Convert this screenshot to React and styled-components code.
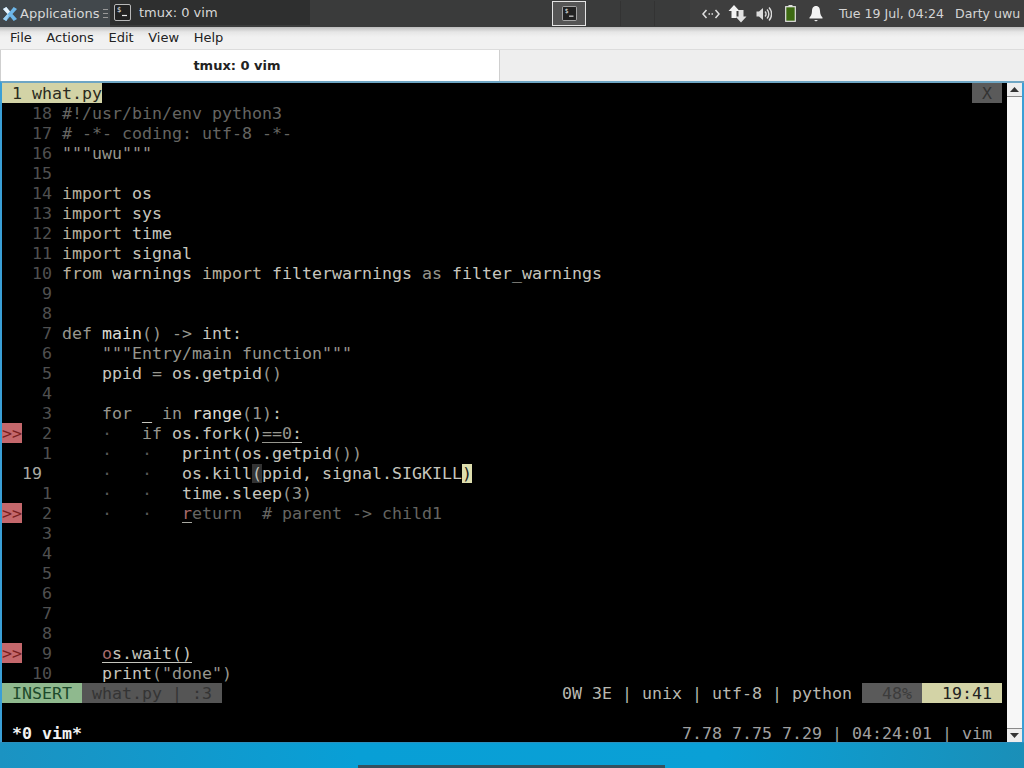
import React from 'react';
import styled, { createGlobalStyle } from 'styled-components';

const GlobalStyle = createGlobalStyle`
  html, body {
    margin: 0;
    padding: 0;
    background: #0b9ad0;
  }
  * {
    box-sizing: border-box;
  }
`;

const Screen = styled.div`
  width: 1024px;
  height: 768px;
  overflow: hidden;
  display: flex;
  flex-direction: column;
  font-family: "DejaVu Sans", sans-serif;
  font-size: 13px;
`;

/* top panel */
const Panel = styled.div`
  height: 27px;
  flex: none;
  display: flex;
  align-items: stretch;
  background: #3a3b3b;
  color: #d8d8d8;
  white-space: nowrap;
`;

const AppsButton = styled.div`
  width: 110px;
  display: flex;
  align-items: center;
  gap: 3px;
  padding-left: 3px;
  background: #42484c;
  flex: none;
`;

const Handle = styled.div`
  width: 5px;
  height: 9px;
  margin-left: 1px;
  border-top: 1px solid #999;
  border-bottom: 1px solid #999;
  position: relative;
  &::after {
    content: '';
    position: absolute;
    left: 0;
    right: 0;
    top: 3px;
    border-top: 1px solid #999;
  }
`;

const WindowButton = styled.div`
  width: 200px;
  display: flex;
  align-items: center;
  gap: 8px;
  padding-left: 4px;
  margin-bottom: 2px;
  background: #2e2f2f;
  flex: none;
`;

const PanelSpacer = styled.div`
  width: 242px;
  flex: none;
`;

const Pager = styled.div`
  display: flex;
  flex: none;
  width: 138px;
`;

const PagerCell = styled.div`
  width: 34px;
  margin-right: ${(props) => (props.$active ? '1px' : '0')};
  height: 25px;
  margin-top: 1px;
  display: flex;
  align-items: center;
  justify-content: center;
  border: ${(props) => (props.$active ? '1px solid #e4e4e4' : 'none')};
  border-right: ${(props) => (props.$active ? '1px solid #e4e4e4' : '1px solid #333')};
  background: ${(props) => (props.$active ? '#555' : 'transparent')};
`;

const Tray = styled.div`
  flex: 1;
  display: flex;
  align-items: center;
  padding-left: 12px;
  background: #3e3e3e;
  overflow: hidden;
  font-size: 12.6px;
`;

const TrayIcon = styled.svg`
  flex: none;
  margin-right: ${(props) => props.$gap}px;
`;

const Clock = styled.span`
  margin-left: 2px;
  color: #d4d4d4;
`;

const UserName = styled.span`
  margin-left: 11px;
  color: #d4d4d4;
`;

/* terminal window chrome */
const MenuBar = styled.div`
  height: 22px;
  flex: none;
  display: flex;
  align-items: center;
  gap: 14.6px;
  padding: 0 0 2px 10px;
  color: #222;
  background: linear-gradient(#bdbdbd 0, #e6e6e6 5px, #f1f1f1 10px);
`;

const TabBar = styled.div`
  height: 32px;
  flex: none;
  display: flex;
  background: #eeeeee;
  border-top: 1px solid #dcdcdc;
`;

const Tab = styled.div`
  width: 500px;
  display: flex;
  align-items: center;
  justify-content: center;
  padding-right: 26px;
  background: #fff;
  border-left: 1px solid #cfcfcf;
  border-right: 1px solid #cfcfcf;
  color: #222;
  font-weight: bold;
`;

const Term = styled.div`
  height: 661px;
  flex: none;
  display: flex;
  border-top: 2px solid #6fa6c4;
  border-left: 2px solid #3a9fd6;
  background: #000;
`;

const Grid = styled.div`
  width: 1005px;
  flex: none;
  display: flex;
  flex-direction: column;
  padding-right: 5px;
  font-family: "DejaVu Sans Mono", monospace;
  font-size: 16.61px;
  color: #c4c4bc;
`;

const Row = styled.div`
  height: 20px;
  line-height: 22px;
  flex: none;
  display: flex;
  white-space: pre;
`;

const SpacedRow = styled(Row)`
  justify-content: space-between;
`;

const BlankRow = styled.div`
  height: 20px;
  flex: none;
`;

const Sign = styled.span`
  width: 20px;
  flex: none;
  color: #7a1f1f;
  background: ${(props) => (props.$on ? '#c4686c' : 'transparent')};
`;

const Num = styled.span`
  width: 40px;
  flex: none;
  padding-right: ${(props) => (props.$current ? '20px' : '10px')};
  color: ${(props) => (props.$current ? '#aaaaa2' : '#505050')};
  text-align: ${(props) => (props.$current ? 'left' : 'right')};
`;

const TONES = {
  text: '#c6c6be',
  name: '#dcdcd4',
  key: '#b8b09e',
  soft: '#96968e',
  dim: '#656562',
  dot: '#565656',
  mark: '#a86c6c',
};

const Tok = styled.span`
  color: ${(props) => TONES[props.$tone || 'text']};
  text-decoration: ${(props) => (props.$under ? 'underline' : 'none')};
  text-underline-offset: 3px;
  text-decoration-thickness: 1px;
  text-decoration-color: ${(props) => props.$lineColor || 'currentColor'};
`;

const ParenOpen = styled.span`
  background: #333;
  color: #c0c0b8;
`;

const ParenClose = styled.span`
  background: #dedeae;
  color: #1c1c1c;
`;

const BufferTab = styled.span`
  width: 100px;
  padding-left: 10px;
  background: #d3d3a6;
  color: #2a2a20;
`;

const CloseTab = styled.span`
  width: 30px;
  padding-left: 10px;
  background: #5a5a5a;
  color: #333;
`;

const ModeLabel = styled.span`
  width: 80px;
  padding-left: 10px;
  background: #8fb98e;
  color: #1d4a2b;
`;

const FileInfo = styled.span`
  width: 140px;
  padding-left: 10px;
  background: #555;
  color: #343434;
`;

const StatusLeft = styled.div`
  display: flex;
`;

const StatusRight = styled.div`
  display: flex;
  width: 440px;
  color: #b8b8b0;
`;

const StatusInfo = styled.span`
  width: 300px;
`;

const Percent = styled.span`
  width: 60px;
  padding-left: 20px;
  background: #5a5a5a;
  color: #3c3c3c;
`;

const Position = styled.span`
  width: 80px;
  padding-left: 20px;
  background: #d3d3a6;
  color: #222;
`;

const Windows = styled.span`
  padding-left: 10px;
  color: #f2f2f2;
  font-weight: bold;
`;

const SystemInfo = styled.span`
  padding-right: 10px;
  color: #a0a0a0;
`;

const Scrollbar = styled.div`
  flex: 1;
  display: flex;
  flex-direction: column;
  justify-content: space-between;
  border-right: 2px solid #3a9fd6;
  background: #f7f7f7;
`;

const ScrollButton = styled.div`
  height: 14px;
  display: flex;
  align-items: center;
  justify-content: center;
  background: #ededed;
  border-bottom: ${(props) => (props.$down ? 'none' : '1px solid #8a8a8a')};
  border-top: ${(props) => (props.$down ? '1px solid #8a8a8a' : 'none')};
`;

const Desktop = styled.div`
  flex: 1;
  display: flex;
  align-items: flex-end;
  justify-content: flex-start;
  padding-left: 358px;
  background: linear-gradient(90deg, #1b93c2 0, #089fd6 35%, #0aa0d6 70%, #1a8fb8 100%);
  border-top: 1px solid #2b8fbd;
`;

const Dock = styled.div`
  width: 307px;
  height: 3px;
  background: #35505e;
`;

const XfceLogo = () => (
  <svg width="14" height="16" viewBox="0 0 17 18">
    <path d="M0 3 L4 0.5 L8.5 6 L13 0.5 L17 3 L11.5 9 L17 15 L13 17.5 L8.5 12 L4 17.5 L0 15 L5.5 9 Z" fill="#6db6e8" />
    <path d="M0 3 L4 0.5 L8.5 6 L5.5 9 Z" fill="#e8f4fc" />
    <path d="M0 15 L5.5 9 L7 10.5 L4 17.5 Z" fill="#9ed0f2" />
  </svg>
);

const TerminalIcon = ({ size = 17 }) => (
  <svg width={size} height={size} viewBox="0 0 17 17">
    <rect x="0.5" y="0.5" width="16" height="16" rx="1.5" fill="#222" stroke="#b8b8b8" />
    <text x="3" y="8" fontSize="7" fontFamily="DejaVu Sans Mono" fill="#eee">$</text>
    <path d="M8 11.5 H13" stroke="#eee" strokeWidth="1.2" />
  </svg>
);

const NetworkIcon = () => (
  <TrayIcon $gap={8} width="18" height="12" viewBox="0 0 18 12" fill="none" stroke="#e0e0e0" strokeWidth="1.5">
    <path d="M4.5 2 L1 6 L4.5 10" />
    <path d="M13.5 2 L17 6 L13.5 10" />
    <path d="M6.5 6 H11.5" strokeDasharray="1.5 1.5" />
  </TrayIcon>
);

const ArrowsIcon = () => (
  <TrayIcon $gap={9} width="19" height="18" viewBox="0 0 19 18">
    <path d="M6 0 L11.5 6 H8.5 V13 H3.5 V6 H0.5 Z" fill="#f2f2f2" />
    <path d="M13 17.5 L7.5 11.5 H10.5 V5 H15.5 V11.5 H18.5 Z" fill="#e2e2e2" />
  </TrayIcon>
);

const SpeakerIcon = () => (
  <TrayIcon $gap={13} width="16" height="16" viewBox="0 0 16 16" fill="none" stroke="#dcdcdc" strokeWidth="1.4">
    <path d="M0.5 5.5 H3 L7 2 V14 L3 10.5 H0.5 Z" fill="#dcdcdc" stroke="none" />
    <path d="M9 5.5 A3.5 3.5 0 0 1 9 10.5" />
    <path d="M11 3.5 A6.5 6.5 0 0 1 11 12.5" />
    <path d="M13 1.5 A9.5 9.5 0 0 1 13 14.5" />
  </TrayIcon>
);

const BatteryIcon = () => (
  <TrayIcon $gap={13} width="11" height="17" viewBox="0 0 11 17">
    <rect x="3.5" y="0" width="4" height="2" fill="#e0e0e0" />
    <rect x="0.7" y="1.7" width="9.6" height="14.6" fill="#3d6a12" stroke="#e4e4e4" strokeWidth="1.2" />
  </TrayIcon>
);

const BellIcon = () => (
  <TrayIcon $gap={14} width="14" height="17" viewBox="0 0 14 17">
    <path d="M7 1 C10 1 11 3.5 11 6 C11 9.5 12.5 11.5 13.5 12.5 V13.5 H0.5 V12.5 C1.5 11.5 3 9.5 3 6 C3 3.5 4 1 7 1 Z" fill="#f2f2f2" />
    <path d="M5 15 H9 L7 16.5 Z" fill="#f2f2f2" />
  </TrayIcon>
);

const Arrow = ({ down }) => (
  <svg width="9" height="5" viewBox="0 0 9 5">
    <path d={down ? 'M0 0 H9 L4.5 5 Z' : 'M0 5 H9 L4.5 0 Z'} fill="#333" />
  </svg>
);

const Line = ({ n, sign, current, children }) => (
  <Row>
    <Sign $on={sign}>{sign ? '>>' : '  '}</Sign>
    <Num $current={current}>{n}</Num>
    <span>{children}</span>
  </Row>
);

const Dots = ({ count }) => (
  <>
    {'    '}
    <Tok $tone="dot">·</Tok>
    {'   '}
    {count > 1 && (
      <>
        <Tok $tone="dot">·</Tok>
        {'   '}
      </>
    )}
  </>
);

const MENU_ITEMS = ['File', 'Actions', 'Edit', 'View', 'Help'];

const App = () => {
  return (
    <Screen>
      <GlobalStyle />
      <Panel>
        <AppsButton>
          <XfceLogo />
          <span>Applications</span>
          <Handle />
        </AppsButton>
        <WindowButton>
          <TerminalIcon />
          <span>tmux: 0 vim</span>
        </WindowButton>
        <PanelSpacer />
        <Pager>
          <PagerCell $active>
            <TerminalIcon size={15} />
          </PagerCell>
          <PagerCell />
          <PagerCell />
        </Pager>
        <Tray>
          <NetworkIcon />
          <ArrowsIcon />
          <SpeakerIcon />
          <BatteryIcon />
          <BellIcon />
          <Clock>Tue 19 Jul, 04:24</Clock>
          <UserName>Darty uwu</UserName>
        </Tray>
      </Panel>

      <MenuBar>
        {MENU_ITEMS.map((item) => (
          <span key={item}>{item}</span>
        ))}
      </MenuBar>

      <TabBar>
        <Tab>tmux: 0 vim</Tab>
      </TabBar>

      <Term>
        <Grid>
          <SpacedRow>
            <BufferTab>1 what.py</BufferTab>
            <CloseTab>X</CloseTab>
          </SpacedRow>
          <Line n="18"><Tok $tone="dim">#!/usr/bin/env python3</Tok></Line>
          <Line n="17"><Tok $tone="dim"># -*- coding: utf-8 -*-</Tok></Line>
          <Line n="16"><Tok $tone="soft">"""uwu"""</Tok></Line>
          <Line n="15" />
          <Line n="14"><Tok $tone="key">import</Tok> <Tok>os</Tok></Line>
          <Line n="13"><Tok $tone="key">import</Tok> <Tok>sys</Tok></Line>
          <Line n="12"><Tok $tone="key">import</Tok> <Tok>time</Tok></Line>
          <Line n="11"><Tok $tone="key">import</Tok> <Tok>signal</Tok></Line>
          <Line n="10"><Tok $tone="key">from</Tok> <Tok>warnings</Tok> <Tok $tone="key">import</Tok> <Tok>filterwarnings</Tok> <Tok $tone="soft">as</Tok> <Tok>filter_warnings</Tok></Line>
          <Line n="9" />
          <Line n="8" />
          <Line n="7"><Tok $tone="soft">def</Tok> <Tok $tone="name">main</Tok><Tok $tone="soft">()</Tok> <Tok $tone="soft">-&gt;</Tok> <Tok>int:</Tok></Line>
          <Line n="6">{'    '}<Tok $tone="soft">"""Entry/main function"""</Tok></Line>
          <Line n="5">{'    '}<Tok>ppid</Tok> <Tok $tone="soft">=</Tok> <Tok>os.getpid</Tok><Tok $tone="soft">()</Tok></Line>
          <Line n="4" />
          <Line n="3">{'    '}<Tok $tone="soft">for</Tok> <Tok $under>_</Tok> <Tok $tone="soft">in</Tok> <Tok $tone="name">range</Tok><Tok $tone="soft">(1)</Tok><Tok>:</Tok></Line>
          <Line n="2" sign><Dots count={1} /><Tok $tone="soft">if</Tok> <Tok>os.fork()</Tok><Tok $tone="soft" $under>==0</Tok><Tok $under>:</Tok></Line>
          <Line n="1"><Dots count={2} /><Tok>print(os.getpid</Tok><Tok $tone="soft">())</Tok></Line>
          <Line n="19" current><Dots count={2} /><Tok>os.kill</Tok><ParenOpen>(</ParenOpen><Tok>ppid, signal.SIGKILL</Tok><ParenClose>)</ParenClose></Line>
          <Line n="1"><Dots count={2} /><Tok>time.sleep</Tok><Tok $tone="soft">(3)</Tok></Line>
          <Line n="2" sign><Dots count={2} /><Tok $tone="mark" $under $lineColor="#a8a8a0">r</Tok><Tok $tone="dim">eturn  # parent -&gt; child1</Tok></Line>
          <Line n="3" />
          <Line n="4" />
          <Line n="5" />
          <Line n="6" />
          <Line n="7" />
          <Line n="8" />
          <Line n="9" sign>{'    '}<Tok $tone="mark" $under $lineColor="#c6c6be">o</Tok><Tok $under>s.wait()</Tok></Line>
          <Line n="10">{'    '}<Tok>print</Tok><Tok $tone="soft">("done")</Tok></Line>
          <SpacedRow>
            <StatusLeft>
              <ModeLabel>INSERT</ModeLabel>
              <FileInfo>what.py | :3</FileInfo>
            </StatusLeft>
            <StatusRight>
              <StatusInfo>0W 3E | unix | utf-8 | python</StatusInfo>
              <Percent>48%</Percent>
              <Position>19:41</Position>
            </StatusRight>
          </SpacedRow>
          <BlankRow />
          <SpacedRow>
            <Windows>*0 vim*</Windows>
            <SystemInfo>7.78 7.75 7.29 | 04:24:01 | vim</SystemInfo>
          </SpacedRow>
        </Grid>
        <Scrollbar>
          <ScrollButton>
            <Arrow />
          </ScrollButton>
          <ScrollButton $down>
            <Arrow down />
          </ScrollButton>
        </Scrollbar>
      </Term>

      <Desktop>
        <Dock />
      </Desktop>
    </Screen>
  );
};

export default App;
